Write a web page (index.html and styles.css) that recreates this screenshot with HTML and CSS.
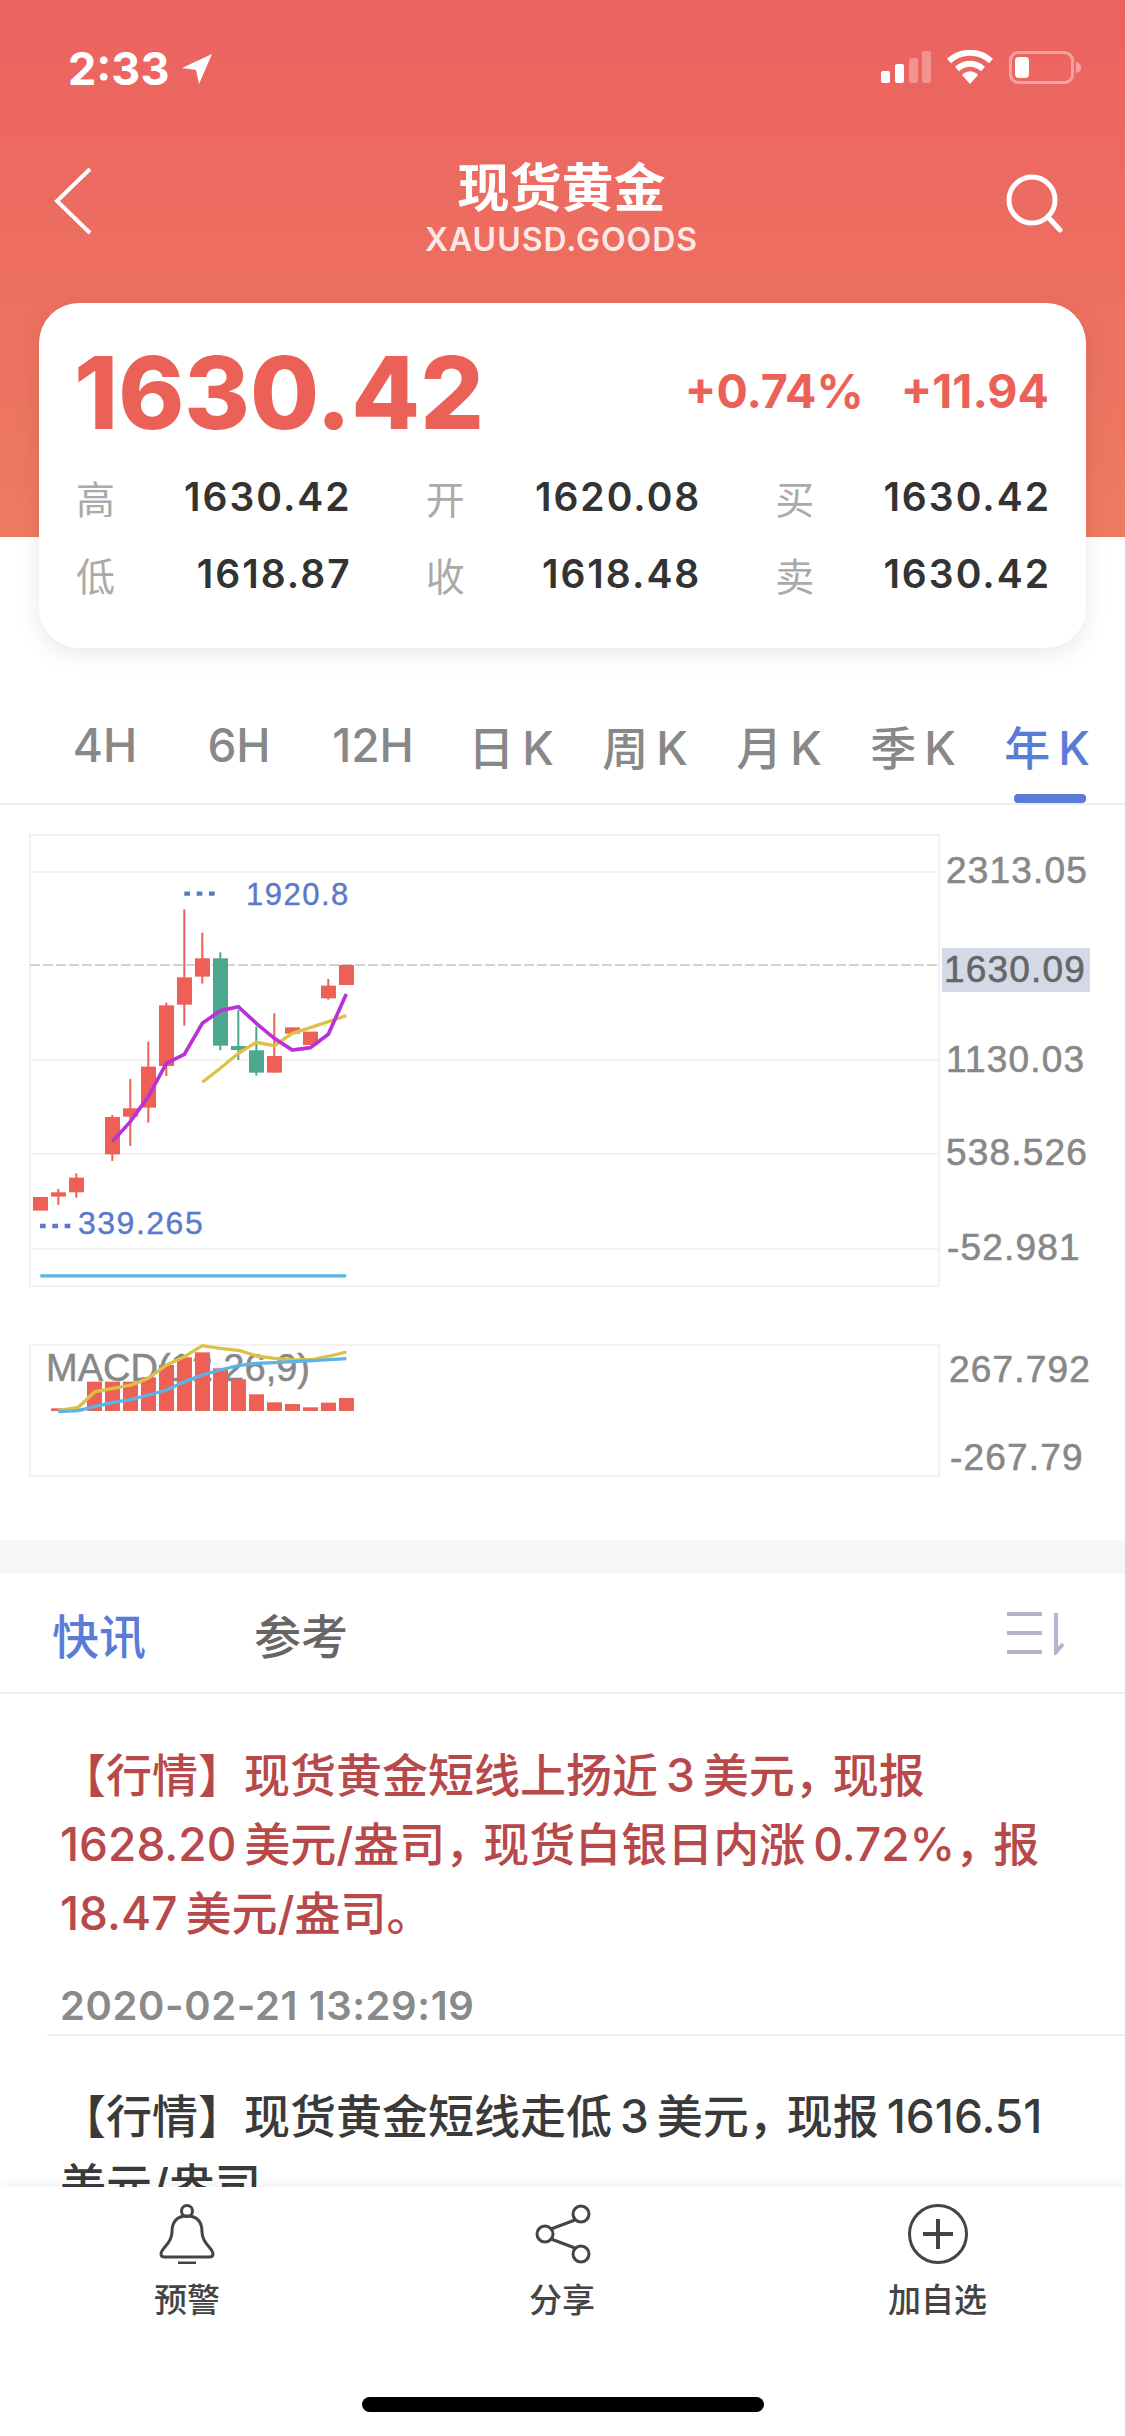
FILE: index.html
```html
<!DOCTYPE html>
<html lang="zh-CN">
<head>
  <meta charset="UTF-8">
  <title>现货黄金</title>
  <link rel="stylesheet" href="styles.css">
</head>
<body>
  <div class="top">
    <div class="status">
      <div class="clock">
        <span>2:33</span>
        <svg class="arrow" width="32" height="32" viewBox="0 0 32 32"><path d="M31 1 L1 15 L15 17 L18 31 Z" fill="#fff"/></svg>
      </div>
      <div class="sys">
        <svg width="50" height="32" viewBox="0 0 50 32">
          <rect x="0" y="20" width="9" height="12" rx="2" fill="#fff"/>
          <rect x="14" y="13" width="9" height="19" rx="2" fill="#fff"/>
          <rect x="28" y="7" width="9" height="25" rx="2" fill="#fff" opacity=".3"/>
          <rect x="41" y="0" width="9" height="32" rx="2" fill="#fff" opacity=".3"/>
        </svg>
        <svg width="46" height="34" viewBox="0 0 46 34">
          <path d="M2 11 C14 0 32 0 44 11" fill="none" stroke="#fff" stroke-width="6"/>
          <path d="M10 19 C18 12 28 12 36 19" fill="none" stroke="#fff" stroke-width="6"/>
          <path d="M15 25 C20 20 26 20 31 25 L23 34 Z" fill="#fff"/>
        </svg>
        <svg width="72" height="33" viewBox="0 0 72 33">
          <rect x="1.5" y="1.5" width="62" height="30" rx="8" fill="none" stroke="#fff" stroke-opacity=".4" stroke-width="3"/>
          <rect x="6" y="6" width="14" height="21" rx="4" fill="#fff"/>
          <path d="M67 11 C71 12 72 14 72 16.500 C72 19 71 21 67 22 Z" fill="#fff" opacity=".4"/>
        </svg>
      </div>
    </div>

    <div class="nav">
      <svg class="back" width="40" height="70" viewBox="0 0 40 70"><path d="M37 3 L4 35 L37 67" fill="none" stroke="#fff" stroke-width="4"/></svg>
      <div class="nav-title">
        <h1>现货黄金</h1>
        <p>XAUUSD.GOODS</p>
      </div>
      <svg class="search" width="60" height="60" viewBox="0 0 60 60">
        <circle cx="28" cy="27" r="23" fill="none" stroke="#fff" stroke-width="5"/>
        <path d="M44 44 L56 57" stroke="#fff" stroke-width="5" stroke-linecap="round"/>
      </svg>
    </div>

    <div class="card">
      <div class="card-head">
        <div class="price">1630.42</div>
        <div class="change">
          <span>+0.74%</span>
          <span>+11.94</span>
        </div>
      </div>
      <div class="quotes">
        <div class="quote"><span>高</span><b>1630.42</b></div>
        <div class="quote"><span>开</span><b>1620.08</b></div>
        <div class="quote"><span>买</span><b>1630.42</b></div>
        <div class="quote"><span>低</span><b>1618.87</b></div>
        <div class="quote"><span>收</span><b>1618.48</b></div>
        <div class="quote"><span>卖</span><b>1630.42</b></div>
      </div>
    </div>
  </div>

  <div class="periods">
    <span>4H</span>
    <span>6H</span>
    <span>12H</span>
    <span>日&#8201;K</span>
    <span>周&#8201;K</span>
    <span>月&#8201;K</span>
    <span>季&#8201;K</span>
    <span class="on">年&#8201;K</span>
  </div>

  <svg class="chart" width="1125" height="735" viewBox="0 805 1125 735">
    <!-- kline frame -->
    <g fill="none" stroke="#f2f2f2" stroke-width="2">
      <rect x="30" y="835" width="909" height="451"/>
      <path d="M30 872 H939 M30 1060 H939 M30 1154 H939 M30 1249 H939"/>
    </g>
    <path d="M30 965 H939" stroke="#c4c4c4" stroke-width="1.500" stroke-dasharray="10 3"/>

    <!-- candles, drawn in 3x units -->
    <g transform="translate(0 820) scale(.3333)">
      <g fill="#ee6055">
        <rect x="99" y="1131" width="45" height="41"/>
        <rect x="172" y="1107" width="6" height="48"/><rect x="153" y="1117" width="45" height="13"/>
        <rect x="226" y="1060" width="6" height="73"/><rect x="207" y="1073" width="45" height="44"/>
        <rect x="334" y="885" width="6" height="138"/><rect x="315" y="891" width="45" height="112"/>
        <rect x="388" y="777" width="6" height="201"/><rect x="369" y="865" width="45" height="25"/>
        <rect x="442" y="665" width="6" height="243"/><rect x="423" y="740" width="45" height="123"/>
        <rect x="496" y="548" width="6" height="220"/><rect x="477" y="556" width="45" height="182"/>
        <rect x="550" y="268" width="6" height="349"/><rect x="531" y="472" width="45" height="82"/>
        <rect x="604" y="338" width="6" height="153"/><rect x="585" y="415" width="45" height="55"/>
        <rect x="820" y="580" width="6" height="178"/><rect x="801" y="708" width="45" height="50"/>
        <rect x="855" y="622" width="45" height="19"/>
        <rect x="909" y="635" width="45" height="40"/>
        <rect x="982" y="477" width="6" height="62"/><rect x="963" y="497" width="45" height="38"/>
        <rect x="1017" y="435" width="45" height="60"/>
      </g>
      <g fill="#4ca78f">
        <rect x="658" y="397" width="6" height="294"/><rect x="639" y="415" width="45" height="262"/>
        <rect x="712" y="570" width="6" height="150"/><rect x="693" y="678" width="45" height="12"/>
        <rect x="766" y="620" width="6" height="147"/><rect x="747" y="691" width="45" height="67"/>
      </g>
      <path d="M607 787 L661 745 L715 700 L769 667 L823 677 L877 640 L931 623 L985 605 L1039 587" fill="none" stroke="#dcc146" stroke-width="10"/>
      <path d="M337 965 L391 905 L445 830 L499 730 L553 703 L607 610 L661 572 L715 560 L769 610 L823 655 L877 690 L931 683 L985 643 L1039 522" fill="none" stroke="#b932d6" stroke-width="11"/>
      <path d="M121 1368 H1039" stroke="#5ab4ea" stroke-width="10"/>
      <path d="M553 221 H645 M120 1218 H213" stroke="#5b79c9" stroke-width="13" stroke-dasharray="17 20"/>
    </g>
    <text class="mark" x="246" y="905">1920.8</text>
    <text class="mark low" x="78" y="1234">339.265</text>

    <!-- price axis -->
    <rect x="942" y="948" width="148" height="44" fill="#d5d8e6"/>
    <text class="axis" x="946" y="883">2313.05</text>
    <text class="axis now" x="944" y="982">1630.09</text>
    <text class="axis" x="946" y="1072">1130.03</text>
    <text class="axis" x="946" y="1165">538.526</text>
    <text class="axis" x="947" y="1260">-52.981</text>

    <!-- macd -->
    <rect x="30" y="1345" width="909" height="131" fill="none" stroke="#f2f2f2" stroke-width="2"/>
    <text class="macd-label" x="46" y="1381">MACD(12,26,9)</text>
    <g transform="translate(0 1320) scale(.3333)">
      <g fill="#ee6055">
        <rect x="153" y="265" width="45" height="8"/>
        <rect x="207" y="265" width="45" height="8" fill="#4ca78f"/>
        <rect x="261" y="185" width="45" height="88"/>
        <rect x="315" y="185" width="45" height="88"/>
        <rect x="369" y="185" width="45" height="88"/>
        <rect x="423" y="172" width="45" height="101"/>
        <rect x="477" y="135" width="45" height="138"/>
        <rect x="531" y="112" width="45" height="161"/>
        <rect x="585" y="97" width="45" height="176"/>
        <rect x="639" y="145" width="45" height="128"/>
        <rect x="693" y="178" width="45" height="95"/>
        <rect x="747" y="223" width="45" height="50"/>
        <rect x="801" y="247" width="45" height="26"/>
        <rect x="855" y="252" width="45" height="21"/>
        <rect x="909" y="262" width="45" height="11"/>
        <rect x="963" y="248" width="45" height="25"/>
        <rect x="1017" y="234" width="45" height="39"/>
      </g>
      <path d="M175 272 L235 262 L285 215 L340 205 L395 195 L445 175 L500 135 L553 110 L607 77 L660 85 L720 92 L770 108 L823 115 L880 120 L940 118 L990 108 L1039 96" fill="none" stroke="#dcc146" stroke-width="10"/>
      <path d="M175 275 L235 272 L283 260 L340 247 L395 238 L445 225 L500 210 L553 185 L607 165 L660 150 L715 137 L770 130 L823 128 L880 125 L940 122 L1039 116" fill="none" stroke="#5ab4ea" stroke-width="10"/>
    </g>
    <text class="axis" x="949" y="1382">267.792</text>
    <text class="axis" x="950" y="1470">-267.79</text>
  </svg>

  <div class="gap"></div>

  <div class="news-tabs">
    <span class="on">快讯</span>
    <span>参考</span>
    <svg class="sort" width="60" height="44" viewBox="0 0 60 44">
      <path d="M2 3 H37 M2 22 H37 M2 41 H37" stroke="#b3b3cc" stroke-width="4"/>
      <path d="M51 2 V41 L58 33" fill="none" stroke="#b3b3cc" stroke-width="4"/>
    </svg>
  </div>

  <div class="news">
    <div class="item">
      <p class="red">【行情】现货黄金短线上扬近&#8201;3&#8201;美元<span class="comma">，</span>现报&#8201;1628.20&#8201;美元/盎司<span class="comma">，</span>现货白银日内涨&#8201;0.72%<span class="comma">，</span>报&#8201;18.47&#8201;美元/盎司。</p>
      <time>2020-02-21 13:29:19</time>
    </div>
    <div class="item">
      <p>【行情】现货黄金短线走低&#8201;3&#8201;美元<span class="comma">，</span>现报&#8201;1616.51&#8201;美元/盎司</p>
    </div>
  </div>

  <div class="bottom">
    <div class="actions">
      <div class="action">
        <svg width="60" height="60" viewBox="0 0 60 60" fill="none" stroke="#444" stroke-width="3">
          <circle cx="30" cy="7" r="5.500"/>
          <path d="M30 12 C18 12 15 20 15 28 C15 40 4 44 4 50 C4 52 6 53 8 53 H52 C54 53 56 52 56 50 C56 44 45 40 45 28 C45 20 42 12 30 12 Z"/>
          <path d="M21 59 H39" stroke-width="3"/>
        </svg>
        <span>预警</span>
      </div>
      <div class="action">
        <svg class="share" width="60" height="60" viewBox="0 0 60 60" fill="none" stroke="#444" stroke-width="3">
          <circle cx="47" cy="10" r="8"/>
          <circle cx="11" cy="30" r="8"/>
          <circle cx="47" cy="50" r="8"/>
          <path d="M41 16 L17 25 M17 35 L41 44"/>
        </svg>
        <span>分享</span>
      </div>
      <div class="action">
        <svg width="60" height="60" viewBox="0 0 60 60" fill="none" stroke="#444" stroke-width="3">
          <circle cx="30" cy="30" r="28.500"/>
          <path d="M15 30 H45 M30 15 V45" stroke-width="4"/>
        </svg>
        <span>加自选</span>
      </div>
    </div>
    <div class="home"></div>
  </div>
</body>
</html>
```

FILE: styles.css
```css
* {
  box-sizing: border-box;
}
html, body {
  margin: 0;
  padding: 0;
}
body {
  width: 1125px;
  height: 2436px;
  overflow: hidden;
  position: relative;
  background: #fff;
  font-family: Inter, "Noto Sans CJK SC", sans-serif;
  color: #333;
}
p, h1 {
  margin: 0;
}
.top {
  height: 648px;
  padding: 0 39px;
  background: linear-gradient(#ec6261, #ee7b60 537px, #fff 537px);
}
.status {
  height: 135px;
  padding: 50px 5px 0 29px;
  display: flex;
  justify-content: space-between;
  align-items: flex-start;
  color: #fff;
}
.clock {
  display: flex;
  align-items: center;
  gap: 12px;
  font-size: 45px;
  line-height: 38px;
  font-weight: 700;
}
.sys {
  display: flex;
  align-items: center;
  gap: 16px;
}
.nav {
  height: 168px;
  margin: 0 -1px;
  padding: 0 23px 0 15px;
  display: grid;
  grid-template-columns: 1fr auto 1fr;
  align-items: center;
}
.back {
  margin-top: -37px;
}
.search {
  margin-top: -33px;
  justify-self: end;
}
.nav-title {
  text-align: center;
  color: #fff;
  margin: -24px 0 0 6px;
}
.nav-title h1 {
  font-size: 52px;
  line-height: 66px;
  font-weight: 700;
}
.nav-title p {
  font-size: 32px;
  line-height: 36px;
  font-weight: 600;
  letter-spacing: 1px;
  opacity: .85;
}
.card {
  height: 345px;
  padding: 0 35px 0 37px;
  background: #fff;
  border-radius: 40px;
  box-shadow: 0 6px 24px rgba(0,0,0,0.09);
}
.card-head {
  height: 155px;
  padding-top: 24px;
  display: flex;
  justify-content: space-between;
  align-items: center;
  color: #ec6157;
}
.price {
  font-size: 100px;
  font-weight: 800;
  line-height: 100px;
  margin-left: -2px;
}
.change {
  display: flex;
  gap: 37px;
  font-size: 46.500px;
  font-weight: 700;
  padding-right: 2px;
  margin-top: -4px;
}
.quotes {
  display: grid;
  grid-template-columns: repeat(3, 1fr);
  column-gap: 74px;
}
.quote {
  height: 77px;
  display: flex;
  justify-content: space-between;
  align-items: center;
  font-size: 39px;
}
.quote span {
  color: #aaa;
}
.quote b {
  font-weight: 600;
  letter-spacing: 2px;
  color: #333;
}
.periods {
  height: 157px;
  padding: 0 1px 0 38px;
  display: grid;
  grid-template-columns: repeat(8, 134px);
  border-bottom: 2px solid #eee;
  font-size: 46px;
  font-weight: 500;
  color: #888;
}
.periods span {
  display: flex;
  justify-content: center;
  align-items: center;
  padding-top: 39px;
  white-space: nowrap;
}
.periods span:nth-child(n+4) {
  padding-left: 8px;
}
.periods .on {
  color: #5b7bd8;
  position: relative;
}
.periods .on::after {
  content: "";
  position: absolute;
  left: 38px;
  width: 72px;
  bottom: 0;
  height: 9px;
  border-radius: 4px;
  background: #5b7bd8;
}
.chart {
  display: block;
}
.chart text {
  font-family: "Liberation Sans", sans-serif;
}
.chart .mark {
  font-size: 31px;
  letter-spacing: 1.500px;
  fill: #5b79c9;
  stroke: #5b79c9;
  stroke-width: .4px;
}
.chart .low {
  font-size: 32px;
}
.chart .axis {
  font-size: 37px;
  letter-spacing: 1.200px;
  fill: #888;
  stroke: #888;
  stroke-width: .6px;
}
.chart .now {
  fill: #666;
  stroke: #666;
}
.chart .macd-label {
  font-size: 38px;
  fill: #888;
  stroke: #888;
  stroke-width: .5px;
}
.gap {
  height: 34px;
  background: #f6f6f6;
}
.news-tabs {
  height: 120px;
  padding: 0 60px 0 52px;
  display: flex;
  align-items: center;
  gap: 108px;
  border-bottom: 2px solid #eee;
  font-size: 47px;
  font-weight: 500;
  color: #666;
}
.news-tabs .on {
  color: #5b7bd8;
}
.sort {
  margin-left: auto;
}
.news {
  padding-top: 47px;
}
.item {
  padding-left: 60px;
  padding-right: 40px;
  font-size: 46px;
  line-height: 69px;
  font-weight: 500;
  color: #3a3a3a;
}
.item .red {
  color: #b8494a;
}
.comma {
  letter-spacing: -8px;
}
.item time {
  display: block;
  margin-top: 28px;
  height: 60px;
  font-size: 40px;
  line-height: 60px;
  font-weight: 600;
  letter-spacing: .6px;
  color: #8a8a8a;
}
.item:first-child {
  position: relative;
}
.item:first-child::after {
  content: "";
  position: absolute;
  left: 47px;
  right: 0;
  bottom: 0;
  height: 2px;
  background: #eee;
}
.item:last-child {
  padding-top: 46px;
}
.bottom {
  position: absolute;
  left: 0;
  right: 0;
  bottom: 0;
  height: 249px;
  background: #fff;
  box-shadow: 0 -4px 10px rgba(0,0,0,0.05);
}
.actions {
  padding-top: 17px;
  display: grid;
  grid-template-columns: 374px 376px 375px;
}
.action {
  display: flex;
  flex-direction: column;
  align-items: center;
  gap: 14px;
  font-size: 33px;
  line-height: 44px;
  font-weight: 500;
  color: #444;
}
.share {
  margin-left: 3px;
}
.home {
  position: absolute;
  left: 362px;
  bottom: 24px;
  width: 402px;
  height: 15px;
  border-radius: 8px;
  background: #000;
}
```
